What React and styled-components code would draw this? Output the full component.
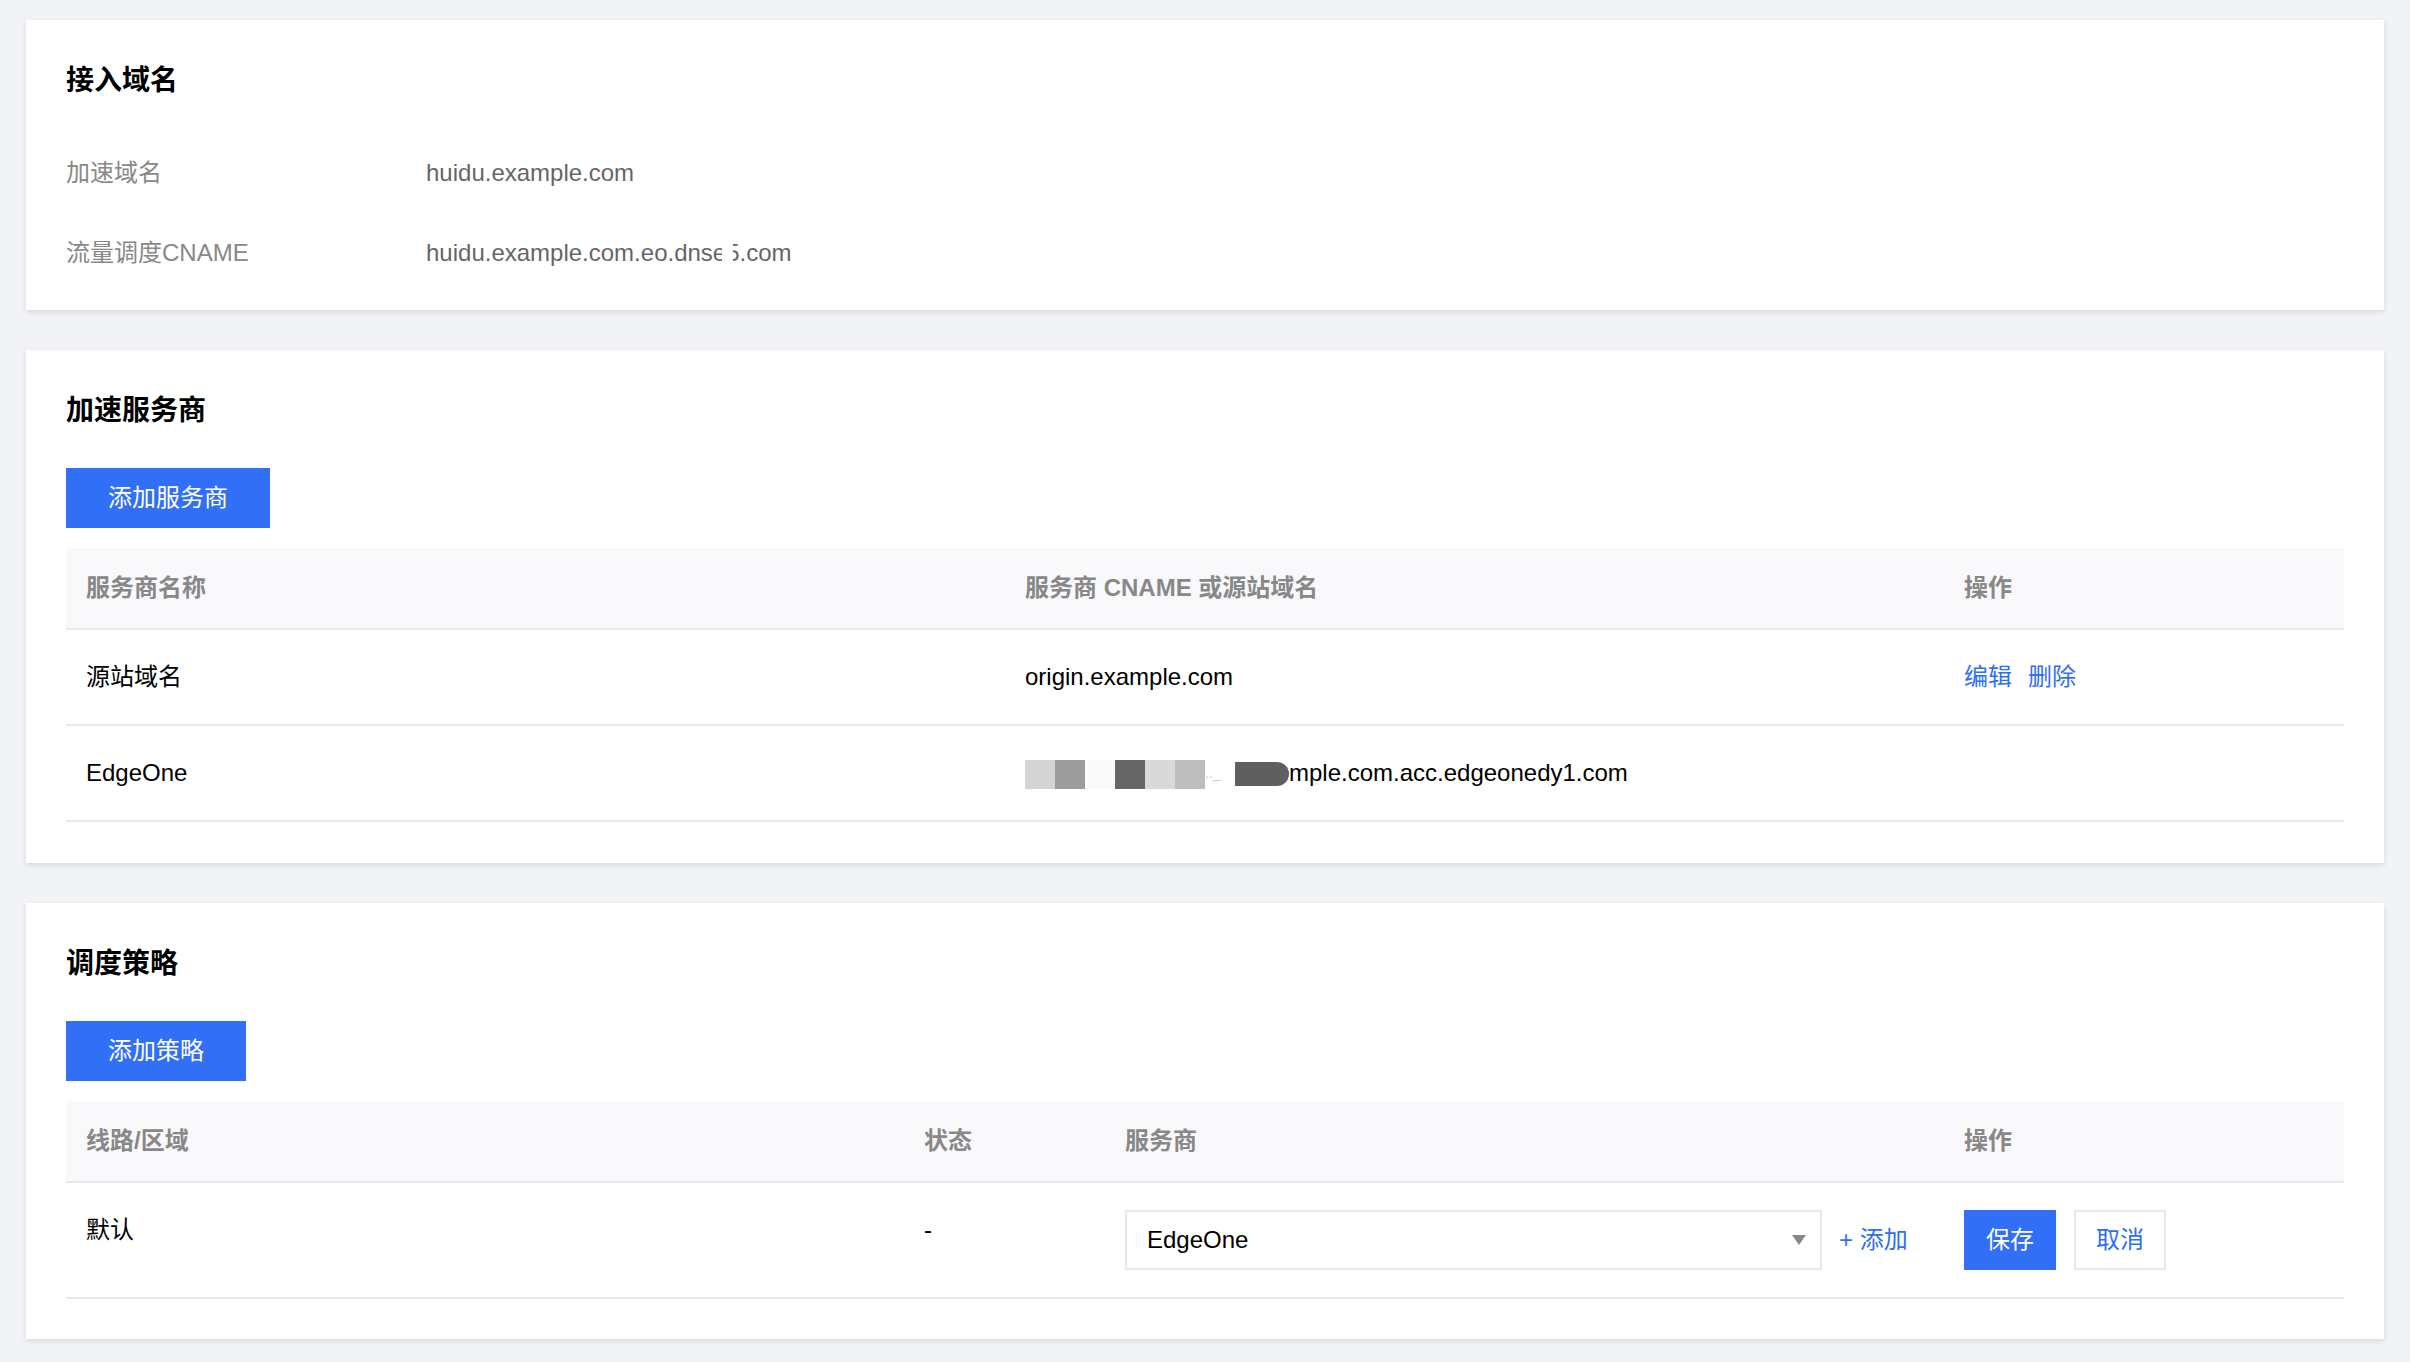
import React from 'react';
import styled, { createGlobalStyle } from 'styled-components';

const GlobalStyle = createGlobalStyle`
    html, body {
        margin: 0;
        padding: 0;
        background: #f2f3f7;
    }
    body {
        font-family: 'Liberation Sans', Arial, 'Noto Sans CJK SC', sans-serif;
        font-size: 24px;
        color: #000;
    }
    * {
        box-sizing: border-box;
    }
`;

const colors = {
    blue: '#306ff6',
    link: '#2d6ff0',
    border: '#e7e7ec',
    headBg: '#f9f9fb',
    label: '#888',
    value: '#666',
    text: '#000',
};

const Page = styled.div`
    padding: 20px 26px 23px;
    display: flex;
    flex-direction: column;
    gap: 40px;
`;

const Card = styled.section`
    background: #fff;
    padding: 40px 40px ${(props) => props.$bottom || 40}px;
    box-shadow: 0 2px 5px rgba(54, 58, 80, 0.14);
`;

const Title = styled.h2`
    margin: 0;
    font-size: 28px;
    font-weight: 700;
    line-height: 42px;
    color: #000;
`;

const InfoList = styled.div`
    display: flex;
    flex-direction: column;
    gap: 40px;
    padding-top: 51px;
`;

const InfoRow = styled.div`
    display: flex;
    line-height: 40px;
    .label {
        width: 360px;
        color: ${colors.label};
    }
    .value {
        color: ${colors.value};
    }
`;

// a hand-made redaction: white strip laid over part of the text
const Redact = styled.span`
    position: relative;
    display: inline-block;
    &::after {
        content: '';
        position: absolute;
        top: 4px;
        bottom: 4px;
        left: ${(props) => props.$left}px;
        width: ${(props) => props.$w}px;
        background: #fff;
    }
`;

const Button = styled.button`
    height: 60px;
    padding: 0 ${(props) => props.$pad || 40}px;
    border: 2px solid ${(props) => (props.$plain ? colors.border : colors.blue)};
    background: ${(props) => (props.$plain ? '#fff' : colors.blue)};
    color: ${(props) => (props.$plain ? colors.link : '#fff')};
    font-family: inherit;
    font-size: 24px;
    line-height: 56px;
    cursor: pointer;
`;

const Toolbar = styled.div`
    margin-top: 36px;
    margin-bottom: 20px;
    display: flex;
`;

const Table = styled.div`
    width: 100%;
`;

const Row = styled.div`
    display: grid;
    grid-template-columns: ${(props) => props.$cols};
    border-bottom: 2px solid ${colors.border};
    background: ${(props) => (props.$head ? colors.headBg : '#fff')};
`;

const Cell = styled.div`
    padding: ${(props) => (props.$head ? '20px' : '27px')} 20px;
    line-height: 40px;
    font-weight: ${(props) => (props.$head ? 700 : 400)};
    color: ${(props) => (props.$head ? colors.label : colors.text)};
    display: flex;
    align-items: flex-start;
    white-space: nowrap;
`;

const Link = styled.a`
    color: ${colors.link};
    cursor: pointer;
    margin-right: 16px;
    text-decoration: none;
`;

const Masked = styled.span`
    display: inline-flex;
    align-items: center;
`;

const Block = styled.span`
    display: inline-block;
    width: ${(props) => props.$w || 30}px;
    height: ${(props) => props.$h || 29}px;
    background: ${(props) => props.$c};
    border-radius: ${(props) => props.$r || '0'};
    margin-top: 2px;
`;

const Faint = styled.span`
    color: #ccc;
    width: 30px;
    display: inline-block;
    font-size: 14px;
`;

const SelectBox = styled.div`
    width: 697px;
    height: 60px;
    border: 2px solid ${colors.border};
    display: flex;
    align-items: center;
    justify-content: space-between;
    padding: 0 14px 0 20px;
    color: #000;
    line-height: 40px;
    cursor: pointer;
`;

const Caret = styled.span`
    width: 0;
    height: 0;
    border-left: 7px solid transparent;
    border-right: 7px solid transparent;
    border-top: 10px solid #888;
`;

const AddLink = styled.a`
    color: ${colors.link};
    margin-left: 17px;
    line-height: 60px;
    cursor: pointer;
`;

const SelectCell = styled(Cell)`
    align-items: center;
`;

const Actions = styled(Cell)`
    gap: 18px;
`;

const providerCols = '939px 939px 1fr';
const policyCols = '838px 201px 839px 1fr';

export default function App() {
    return (
        <>
            <GlobalStyle />
            <Page>
                <Card $bottom={37}>
                    <Title>接入域名</Title>
                    <InfoList>
                        <InfoRow>
                            <span className="label">加速域名</span>
                            <span className="value">huidu.example.com</span>
                        </InfoRow>
                        <InfoRow>
                            <span className="label">流量调度CNAME</span>
                            <span className="value">
                                huidu.example.com.eo.dns
                                <Redact $left={9} $w={11}>
                                    e5
                                </Redact>
                                .com
                            </span>
                        </InfoRow>
                    </InfoList>
                </Card>

                <Card $bottom={41}>
                    <Title>加速服务商</Title>
                    <Toolbar>
                        <Button>添加服务商</Button>
                    </Toolbar>
                    <Table>
                        <Row $head $cols={providerCols}>
                            <Cell $head>服务商名称</Cell>
                            <Cell $head>服务商 CNAME 或源站域名</Cell>
                            <Cell $head>操作</Cell>
                        </Row>
                        <Row $cols={providerCols}>
                            <Cell>源站域名</Cell>
                            <Cell>origin.example.com</Cell>
                            <Cell>
                                <Link>编辑</Link>
                                <Link>删除</Link>
                            </Cell>
                        </Row>
                        <Row $cols={providerCols}>
                            <Cell>EdgeOne</Cell>
                            <Cell>
                                <Masked>
                                    <Block $c="#d4d4d4" />
                                    <Block $c="#9c9c9c" />
                                    <Block $c="#fafafa" />
                                    <Block $c="#666" />
                                    <Block $c="#d9d9d9" />
                                    <Block $c="#bdbdbd" />
                                    <Faint>.._</Faint>
                                    <Block $c="#5f5f5f" $w={54} $h={24} $r="0 12px 12px 0" />
                                    <span>mple.com.acc.edgeonedy1.com</span>
                                </Masked>
                            </Cell>
                            <Cell />
                        </Row>
                    </Table>
                </Card>

                <Card $bottom={40}>
                    <Title>调度策略</Title>
                    <Toolbar>
                        <Button>添加策略</Button>
                    </Toolbar>
                    <Table>
                        <Row $head $cols={policyCols}>
                            <Cell $head>线路/区域</Cell>
                            <Cell $head>状态</Cell>
                            <Cell $head>服务商</Cell>
                            <Cell $head>操作</Cell>
                        </Row>
                        <Row $cols={policyCols}>
                            <Cell>默认</Cell>
                            <Cell>-</Cell>
                            <SelectCell>
                                <SelectBox>
                                    <span>EdgeOne</span>
                                    <Caret />
                                </SelectBox>
                                <AddLink>+ 添加</AddLink>
                            </SelectCell>
                            <Actions>
                                <Button $pad={20}>保存</Button>
                                <Button $plain $pad={20}>
                                    取消
                                </Button>
                            </Actions>
                        </Row>
                    </Table>
                </Card>
            </Page>
        </>
    );
}
